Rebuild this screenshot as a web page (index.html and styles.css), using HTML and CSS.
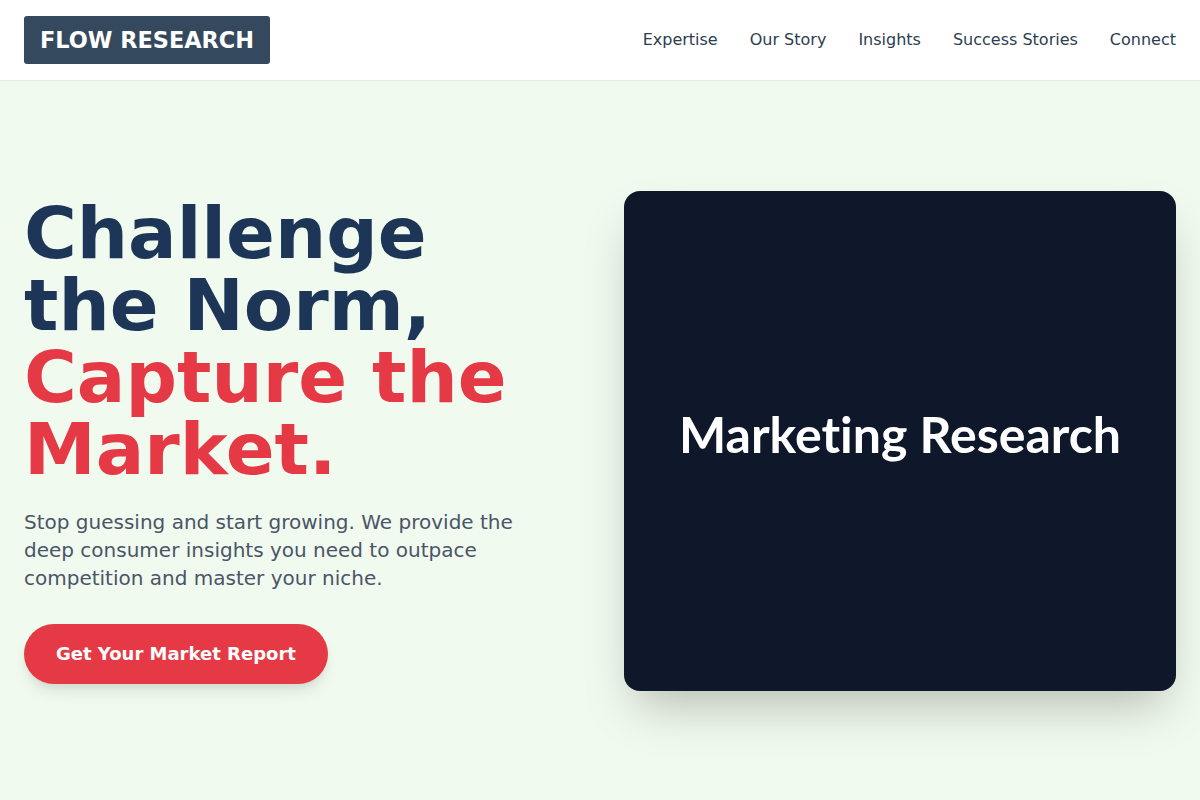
FILE: index.html
```html
<!DOCTYPE html>
<html lang="en">
<head>
<meta charset="utf-8">
<title>Flow Research</title>
<link rel="stylesheet" href="styles.css">
</head>
<body>
<header class="site-header">
  <a class="logo" href="#">FLOW RESEARCH</a>
  <nav class="nav">
    <a href="#">Expertise</a>
    <a href="#">Our Story</a>
    <a href="#">Insights</a>
    <a href="#">Success Stories</a>
    <a href="#">Connect</a>
  </nav>
</header>
<section class="hero">
  <div class="hero-text">
    <h1 class="title">Challenge the Norm, <span class="accent">Capture the Market.</span></h1>
    <p class="lead">Stop guessing and start growing. We provide the deep consumer insights you need to outpace competition and master your niche.</p>
    <a class="cta" href="#">Get Your Market Report</a>
  </div>
  <div class="hero-visual">
    <div class="visual-card"><span class="visual-label">Marketing Research</span></div>
  </div>
</section>
</body>
</html>
```
FILE: styles.css
```css
* { box-sizing: border-box; }
html, body { margin: 0; padding: 0; }
body {
  font-family: "DejaVu Sans", sans-serif;
  background: #f1faee;
  color: #1d3557;
}
a { text-decoration: none; }

.site-header {
  height: 81px;
  background: #ffffff;
  border-bottom: 1px solid #e6ebe6;
  display: flex;
  align-items: center;
  justify-content: space-between;
  padding: 0 24px;
}
.logo {
  display: block;
  background: #34495e;
  color: #ffffff;
  font-weight: 700;
  font-size: 22.4px;
  line-height: 48px;
  height: 48px;
  padding: 0 16px;
  border-radius: 3px;
  margin-top: -1px;
}
.nav {
  display: flex;
  gap: 32px;
  margin-top: -1px;
}
.nav a {
  color: #2c3e50;
  font-size: 16px;
}

.hero {
  min-height: 719px;
  display: grid;
  grid-template-columns: 1fr 1fr;
  gap: 48px;
  align-items: center;
  padding: 0 24px;
}
.title {
  margin: 0 0 23px;
  font-size: 72px;
  line-height: 72px;
  font-weight: 700;
  color: #1d3557;
}
.accent { color: #e63946; }
.lead {
  margin: 0 0 32px;
  max-width: 520px;
  font-size: 20px;
  line-height: 28px;
  color: #4a5568;
}
.cta {
  display: inline-block;
  background: #e63946;
  color: #ffffff;
  font-weight: 700;
  font-size: 18px;
  line-height: 60px;
  height: 60px;
  padding: 0 32px;
  border-radius: 30px;
  box-shadow: 0 10px 15px -3px rgba(0,0,0,0.1), 0 4px 6px -2px rgba(0,0,0,0.05);
}
.visual-card {
  height: 500px;
  background: #0f172a;
  border-radius: 16px;
  display: flex;
  align-items: center;
  justify-content: center;
  color: #ffffff;
  font-family: "Lato", sans-serif;
  font-weight: 700;
  font-size: 50px;
  font-variant-ligatures: none;
  box-shadow: 0 25px 50px -12px rgba(0,0,0,0.25);
}
.visual-label {
  margin-bottom: 14px;
}
```
